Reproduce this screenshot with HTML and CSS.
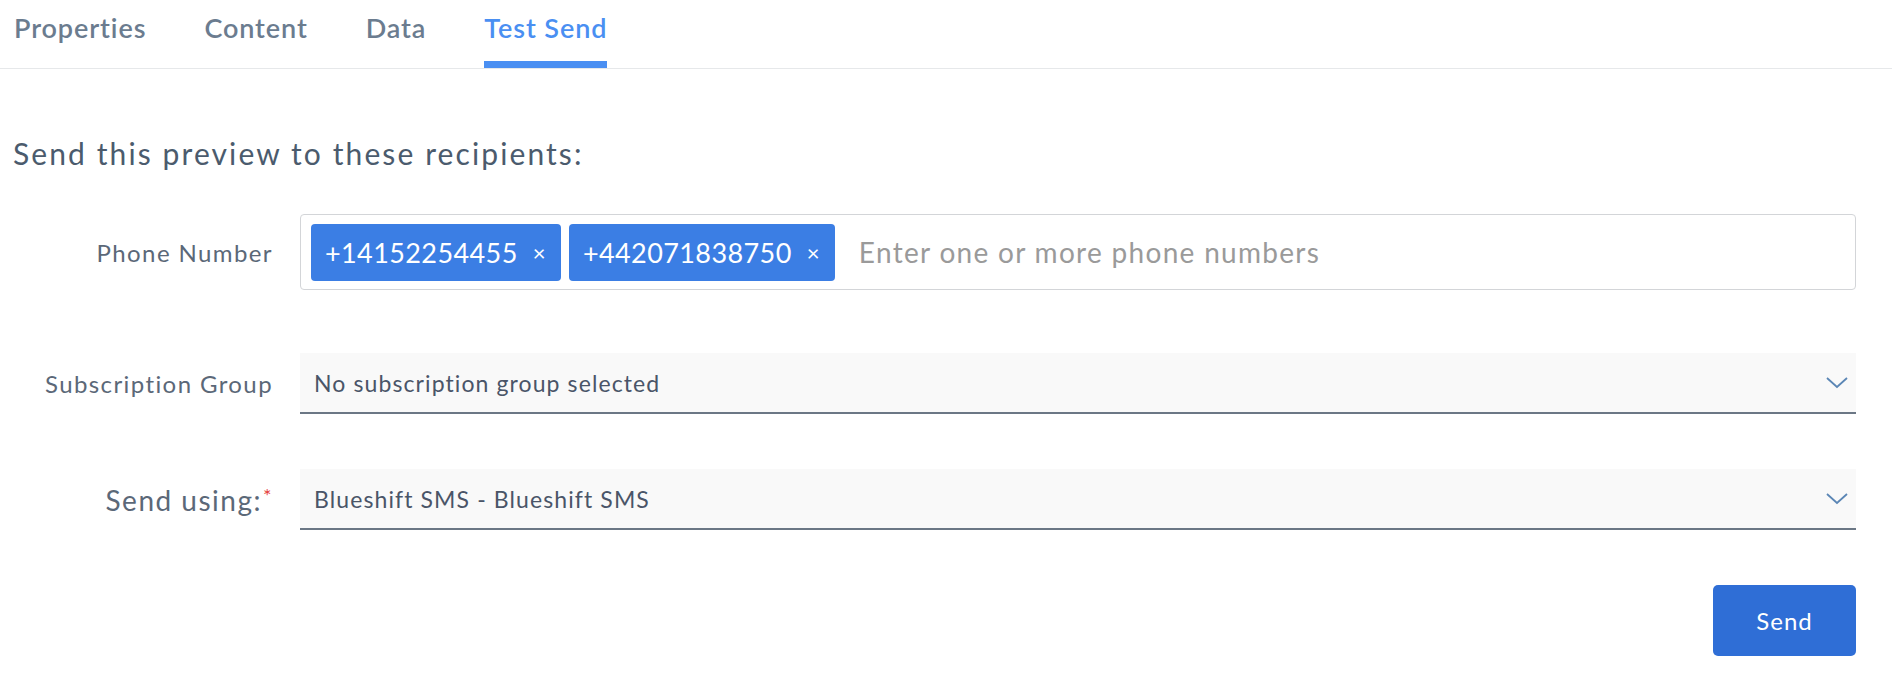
FILE: index.html
```html
<!DOCTYPE html>
<html lang="en">
<head>
    <meta charset="UTF-8">
    <meta name="viewport" content="width=device-width, initial-scale=1.0">
    <title>Test Send</title>
    <link rel="stylesheet" href="styles.css">
</head>
<body>
    <div class="tabs">
        <div class="tab">Properties</div>
        <div class="tab">Content</div>
        <div class="tab">Data</div>
        <div class="tab active">Test Send</div>
    </div>

    <div class="panel">
        <h2>Send this preview to these recipients:</h2>

        <div class="form-row phone-row">
            <label class="field-label">Phone Number</label>
            <div class="tag-input">
                <span class="chip">+14152254455 <span class="chip-x">&times;</span></span>
                <span class="chip">+442071838750 <span class="chip-x">&times;</span></span>
                <input type="text" placeholder="Enter one or more phone numbers">
            </div>
        </div>

        <div class="form-row">
            <label class="field-label">Subscription Group</label>
            <div class="select">
                <span>No subscription group selected</span>
                <svg class="chevron" width="22" height="12" viewBox="0 0 22 12"><path d="M1 1 L11 10 L21 1" fill="none" stroke="#5b86b5" stroke-width="1.8"/></svg>
            </div>
        </div>

        <div class="form-row">
            <label class="field-label big">Send using:<span class="req">*</span></label>
            <div class="select">
                <span>Blueshift SMS - Blueshift SMS</span>
                <svg class="chevron" width="22" height="12" viewBox="0 0 22 12"><path d="M1 1 L11 10 L21 1" fill="none" stroke="#5b86b5" stroke-width="1.8"/></svg>
            </div>
        </div>

        <div class="actions">
            <button>Send</button>
        </div>
    </div>
</body>
</html>
```

FILE: styles.css
```css
body {
    margin: 0;
    font-family: Lato, "Open Sans", sans-serif;
    background: #ffffff;
    color: #4a5a6c;
}
.tabs {
    display: flex;
    gap: 58px;
    padding-left: 14px;
    height: 69px;
    border-bottom: 1px solid #e6e8ea;
    box-sizing: border-box;
}
.tab {
    font-size: 27px;
    font-weight: 600;
    color: #6b7c8f;
    padding-top: 11px;
    border-bottom: 7px solid transparent;
    box-sizing: border-box;
    letter-spacing: 0.9px;
}
.tab.active {
    color: #4a8ff2;
    border-bottom-color: #4a8ff2;
}
.panel {
    padding: 0 36px 0 13px;
}
h2 {
    font-size: 30px;
    line-height: 36px;
    font-weight: 400;
    color: #4b5b6d;
    margin: 66px 0 43px 0;
    letter-spacing: 2.1px;
}
.form-row {
    display: grid;
    grid-template-columns: 260px 1fr;
    column-gap: 27px;
    align-items: center;
    margin-bottom: 55px;
}
.phone-row {
    margin-bottom: 63px;
}
.field-label {
    text-align: right;
    font-size: 24px;
    color: #5b6878;
    letter-spacing: 1.4px;
}
.field-label.big {
    font-size: 28px;
    letter-spacing: 1.5px;
}
.req {
    color: #e53e3e;
    font-size: 20px;
    vertical-align: top;
    margin-left: 1px;
}
.tag-input {
    display: flex;
    align-items: center;
    gap: 8px;
    height: 76px;
    padding: 0 10px;
    border: 1px solid #d3d5d8;
    border-radius: 4px;
    box-sizing: border-box;
}
.chip {
    display: flex;
    align-items: center;
    height: 57px;
    padding: 0 15px 0 14px;
    background: #3b7ee4;
    color: #ffffff;
    font-size: 27px;
    border-radius: 4px;
    letter-spacing: 0.4px;
}
.chip-x {
    font-size: 22px;
    margin-left: 15px;
}
.tag-input input {
    flex: 1;
    border: none;
    outline: none;
    font-family: inherit;
    font-size: 28px;
    color: #4a5a6c;
    margin-left: 14px;
    letter-spacing: 1.3px;
}
.tag-input input::placeholder {
    color: #9a9a9a;
}
.select {
    display: flex;
    align-items: center;
    justify-content: space-between;
    height: 61px;
    padding: 0 8px 0 14px;
    background: #f9f9f9;
    border-bottom: 2px solid #6b7785;
    box-sizing: border-box;
    font-size: 23px;
    color: #4a5568;
    letter-spacing: 1.1px;
}
.actions {
    display: flex;
    justify-content: flex-end;
}
button {
    width: 143px;
    height: 71px;
    background: #2f6ed6;
    color: #ffffff;
    border: none;
    border-radius: 5px;
    font-family: inherit;
    font-size: 24px;
    letter-spacing: 1px;
    cursor: pointer;
}
```
